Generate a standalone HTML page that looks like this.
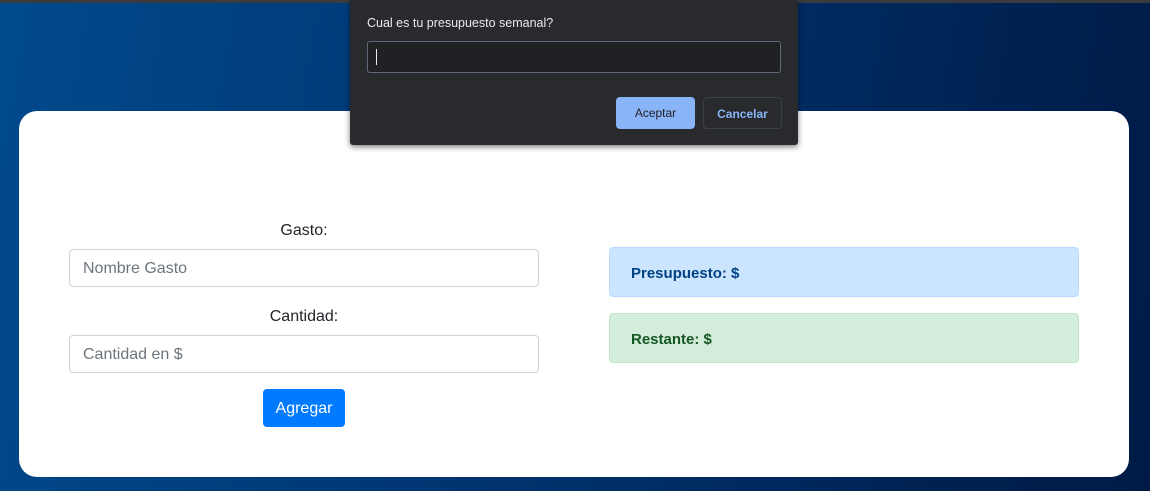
<!DOCTYPE html>
<html><head><style>
*{box-sizing:border-box;margin:0;padding:0}
body{width:1150px;height:491px;overflow:hidden;position:relative;font-family:"Liberation Sans",sans-serif;background:linear-gradient(100deg,#004a8c 0%,#003470 45%,#001a45 100%)}
.topbar{position:absolute;left:0;top:0;width:1150px;height:3px;background:#3a3b3e}
.card{position:absolute;left:19px;top:111px;width:1110px;height:366px;background:#fff;border-radius:18px}
.lbl{position:absolute;width:470px;left:69px;text-align:center;font-size:16px;color:#212529}
.inp{position:absolute;left:69px;width:470px;height:38px;border:1px solid #ced4da;border-radius:4px;padding-left:13px;line-height:38px;font-size:16px;color:#6c757d}
.btn{position:absolute;left:263px;top:389px;width:82px;height:38px;background:#007bff;border-radius:4px;color:#fff;font-size:16px;text-align:center;line-height:39px}
.al{position:absolute;left:609px;width:470px;height:50px;border-radius:4px;padding-left:21px;line-height:51px;font-weight:bold;font-size:15px}
.dlg{position:absolute;left:350px;top:0;width:448px;height:145px;background:#292a2d;box-shadow:0 2px 6px rgba(0,0,0,.5);border-radius:0 0 3px 3px}
.dlg .t{position:absolute;left:17px;top:16px;font-size:12.5px;color:#e8eaed}
.dlg .i{position:absolute;left:17px;top:41px;width:414px;height:32px;background:#202124;border:1px solid #5f6b7d;border-radius:3px}
.dlg .c{position:absolute;left:8px;top:7px;width:1px;height:16px;background:#e8eaed}
.b{position:absolute;top:97px;width:79px;height:32px;border-radius:4px;font-size:12px;font-weight:bold;text-align:center;line-height:32px}
</style></head><body>
<div class="topbar"></div>
<div class="card"></div>
<div class="lbl" style="top:222px">Gasto:</div>
<div class="inp" style="top:249px">Nombre Gasto</div>
<div class="lbl" style="top:308px">Cantidad:</div>
<div class="inp" style="top:335px">Cantidad en $</div>
<div class="btn">Agregar</div>
<div class="al" style="top:247px;background:#cce5ff;border:1px solid #b8daff;color:#004085">Presupuesto: $</div>
<div class="al" style="top:313px;background:#d4edda;border:1px solid #c3e6cb;color:#155724">Restante: $</div>
<div class="dlg">
<div class="t">Cual es tu presupuesto semanal?</div>
<div class="i"><div class="c"></div></div>
<div class="b" style="left:266px;background:#8ab4f8;color:#202124;font-weight:normal">Aceptar</div>
<div class="b" style="left:353px;border:1px solid #3c4043;color:#8ab4f8">Cancelar</div>
</div>
</body></html>
